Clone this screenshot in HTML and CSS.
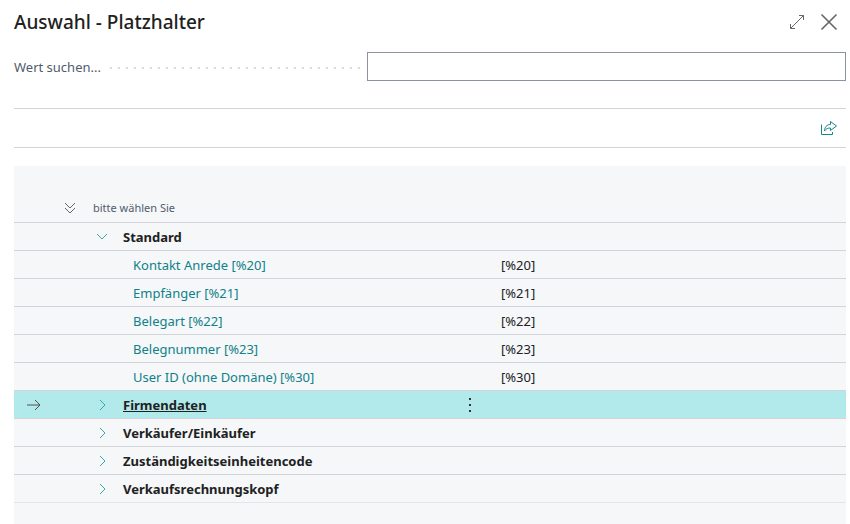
FILE: index.html
```html
<!DOCTYPE html>
<html lang="de">
<head>
  <meta charset="UTF-8">
  <meta name="viewport" content="width=device-width, initial-scale=1.0">
  <title>Auswahl - Platzhalter</title>
  <link rel="stylesheet" href="styles.css">
</head>
<body>
  <div class="dialog">
    <header class="dialog-header">
      <h1>Auswahl - Platzhalter</h1>
      <div class="window-buttons">
        <button type="button" class="icon-btn" aria-label="Maximieren">
          <svg width="16" height="16" viewBox="0 0 16 16"><path d="M1.500 14.500l13-13M10 1.500h4.500v4.500M1.500 10v4.500H6"/></svg>
        </button>
        <button type="button" class="icon-btn close" aria-label="Schließen">
          <svg width="18" height="18" viewBox="0 0 18 18"><path d="M1.500 1.500l15 15M16.500 1.500l-15 15"/></svg>
        </button>
      </div>
    </header>

    <div class="field">
      <label for="search">Wert suchen...</label>
      <span class="dots"></span>
      <input type="text" id="search">
    </div>

    <div class="toolbar">
      <button type="button" class="icon-btn share" aria-label="Teilen">
        <svg width="18" height="16" viewBox="0 0 18 16">
          <path d="M1.500 4.500v10h11v-2.500"/>
          <path d="M10.500 1.500l6 4.500-6 4.500V8C8 8 6 8.500 4.500 11c0-4 2.500-6.500 6-6.500z"/>
        </svg>
      </button>
    </div>

    <div class="list">
      <table>
        <colgroup>
          <col class="col-marker">
          <col class="col-expand">
          <col class="col-name">
          <col class="col-menu">
          <col>
        </colgroup>
        <thead>
          <tr>
            <th></th>
            <th>
              <button type="button" class="icon-btn expand-all" aria-label="Alle aufklappen">
                <svg width="12" height="14" viewBox="0 0 12 14"><path d="M1 2l5 5 5-5M1 7l5 5 5-5"/></svg>
              </button>
            </th>
            <th class="head-name">bitte wählen Sie</th>
            <th></th>
            <th></th>
          </tr>
        </thead>
        <tbody>
          <tr>
            <td></td>
            <td></td>
            <td><div class="group">
              <button type="button" class="icon-btn toggle" aria-label="Zuklappen"><svg width="12" height="12" viewBox="0 0 12 12"><path d="M1 3l5 5 5-5"/></svg></button>
              <span>Standard</span>
            </div></td>
            <td></td>
            <td></td>
          </tr>
          <tr>
            <td></td>
            <td></td>
            <td><a href="#" class="item">Kontakt Anrede [%20]</a></td>
            <td></td>
            <td class="value">[%20]</td>
          </tr>
          <tr>
            <td></td>
            <td></td>
            <td><a href="#" class="item">Empfänger [%21]</a></td>
            <td></td>
            <td class="value">[%21]</td>
          </tr>
          <tr>
            <td></td>
            <td></td>
            <td><a href="#" class="item">Belegart [%22]</a></td>
            <td></td>
            <td class="value">[%22]</td>
          </tr>
          <tr>
            <td></td>
            <td></td>
            <td><a href="#" class="item">Belegnummer [%23]</a></td>
            <td></td>
            <td class="value">[%23]</td>
          </tr>
          <tr>
            <td></td>
            <td></td>
            <td><a href="#" class="item">User ID (ohne Domäne) [%30]</a></td>
            <td></td>
            <td class="value">[%30]</td>
          </tr>
          <tr class="selected">
            <td class="marker"><svg width="14" height="12" viewBox="0 0 14 12"><path d="M0 6h13M8 1l5 5-5 5"/></svg></td>
            <td></td>
            <td><div class="group">
              <button type="button" class="icon-btn toggle" aria-label="Aufklappen"><svg width="12" height="12" viewBox="0 0 12 12"><path d="M4 1l5 5-5 5"/></svg></button>
              <a href="#">Firmendaten</a>
            </div></td>
            <td>
              <button type="button" class="icon-btn menu" aria-label="Weitere Optionen">
                <svg width="4" height="16" viewBox="0 0 4 16"><path d="M1 1h2v2H1zM1 7h2v2H1zM1 13h2v2H1z"/></svg>
              </button>
            </td>
            <td></td>
          </tr>
          <tr>
            <td></td>
            <td></td>
            <td><div class="group">
              <button type="button" class="icon-btn toggle" aria-label="Aufklappen"><svg width="12" height="12" viewBox="0 0 12 12"><path d="M4 1l5 5-5 5"/></svg></button>
              <span>Verkäufer/Einkäufer</span>
            </div></td>
            <td></td>
            <td></td>
          </tr>
          <tr>
            <td></td>
            <td></td>
            <td><div class="group">
              <button type="button" class="icon-btn toggle" aria-label="Aufklappen"><svg width="12" height="12" viewBox="0 0 12 12"><path d="M4 1l5 5-5 5"/></svg></button>
              <span>Zuständigkeitseinheitencode</span>
            </div></td>
            <td></td>
            <td></td>
          </tr>
          <tr>
            <td></td>
            <td></td>
            <td><div class="group">
              <button type="button" class="icon-btn toggle" aria-label="Aufklappen"><svg width="12" height="12" viewBox="0 0 12 12"><path d="M4 1l5 5-5 5"/></svg></button>
              <span>Verkaufsrechnungskopf</span>
            </div></td>
            <td></td>
            <td></td>
          </tr>
        </tbody>
      </table>
    </div>
  </div>
</body>
</html>
```
FILE: styles.css
```css
* {
  margin: 0;
  padding: 0;
  box-sizing: border-box;
}

body {
  font-family: 'Segoe UI', 'Noto Sans', sans-serif;
  font-size: 13px;
  color: #212121;
  background: #fff;
}

.dialog {
  display: flex;
  flex-direction: column;
  min-height: 100vh;
  padding: 0 4px 0 14px;
}

.dialog-header {
  display: flex;
  align-items: center;
  justify-content: space-between;
  height: 43px;
  padding-right: 8px;
}

h1 {
  font-size: 19px;
  font-weight: 500;
}

.window-buttons {
  display: flex;
  align-items: center;
  gap: 15px;
}

.icon-btn {
  display: flex;
  align-items: center;
  justify-content: center;
  background: none;
  border: none;
  color: #666;
  cursor: pointer;
}

svg {
  display: block;
  fill: none;
  stroke: currentColor;
}

.close svg {
  stroke-width: 1.6;
}

.field {
  display: flex;
  align-items: center;
  margin-top: 9px;
}

.field label {
  color: #505c6d;
}

.dots {
  flex: 1;
  height: 2px;
  margin: 2px 5px 0 9px;
  background: repeating-linear-gradient(to right, #d8d9dc 0 2px, transparent 2px 8px);
}

.field input {
  width: 58%;
  max-width: 479px;
  height: 29px;
  padding: 0 8px;
  font: inherit;
  border: 1px solid #8b92a0;
}

.toolbar {
  display: flex;
  align-items: center;
  justify-content: flex-end;
  height: 40px;
  margin: 27px 0 18px;
  padding-right: 8px;
  border-top: 1px solid #d2d4da;
  border-bottom: 1px solid #d2d4da;
}

.share {
  color: #1a868c;
}

.list {
  flex: 1;
  background: #f5f7f9;
}

table {
  width: 100%;
  table-layout: fixed;
  border-collapse: separate;
  border-spacing: 0;
}

.col-marker {
  width: 40px;
}

.col-expand {
  width: 32px;
}

.col-name {
  width: 360px;
}

.col-menu {
  width: 48px;
}

th {
  height: 57px;
  padding-bottom: 7px;
  font-size: 11px;
  font-weight: 400;
  text-align: left;
  vertical-align: bottom;
  color: #505c6d;
  border-bottom: 1px solid #d2d4da;
}

.expand-all {
  margin: 0 auto;
}

.head-name {
  padding-left: 7px;
}

td {
  height: 28px;
  border-bottom: 1px solid #d2d4da;
}

tbody tr:last-child td {
  border-bottom-color: #e4e5e8;
}

.group {
  display: flex;
  align-items: center;
  gap: 15px;
  padding-left: 10px;
  font-weight: 700;
}

.group a {
  color: inherit;
}

.toggle {
  color: #3aa6ad;
}

.item {
  padding-left: 47px;
  color: #0f8188;
  text-decoration: none;
}

.value {
  padding-left: 7px;
}

.selected td {
  background: #b2eaec;
}

.marker {
  padding-left: 13px;
  color: #505050;
}

.menu {
  margin: 0 auto;
  color: #333;
}

.menu svg {
  fill: currentColor;
  stroke: none;
}
```
